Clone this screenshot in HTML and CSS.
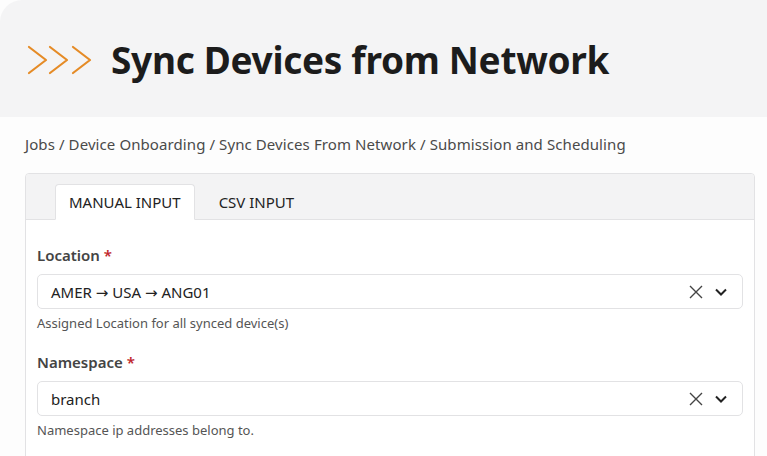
FILE: index.html
```html
<!DOCTYPE html>
<html>
<head>
<meta charset="utf-8">
<link rel="stylesheet" href="styles.css">
</head>
<body>
<header class="page-header">
  <svg class="logo" width="66" height="30" viewBox="0 0 66 30">
    <g fill="none" stroke="#e58b26" stroke-width="2.2" stroke-linecap="round" stroke-linejoin="round">
      <path d="M2 2 L19 15 L2 28"/>
      <path d="M23 2 L40 15 L23 28"/>
      <path d="M46 2 L63 15 L46 28"/>
    </g>
  </svg>
  <h1 class="title">Sync Devices from Network</h1>
</header>
<nav class="breadcrumb">Jobs / Device Onboarding / Sync Devices From Network / Submission and Scheduling</nav>
<section class="card">
  <div class="card-header">
    <div class="tab active">MANUAL INPUT</div>
    <div class="tab">CSV INPUT</div>
  </div>
  <div class="card-body">
    <div class="field">
      <label class="label">Location <span class="req">*</span></label>
      <div class="select">
        <span class="value">AMER <span class="arrow">→</span> USA <span class="arrow">→</span> ANG01</span>
        <span class="icons">
          <svg width="16" height="16" viewBox="0 0 16 16"><path d="M2 2 L14 14 M14 2 L2 14" stroke="#444" stroke-width="1.4" fill="none"/></svg>
          <svg width="14" height="14" viewBox="0 0 14 14"><path d="M2 4.5 L7 9.5 L12 4.5" stroke="#222" stroke-width="2" fill="none"/></svg>
        </span>
      </div>
      <div class="help">Assigned Location for all synced device(s)</div>
    </div>
    <div class="field">
      <label class="label">Namespace <span class="req">*</span></label>
      <div class="select">
        <span class="value">branch</span>
        <span class="icons">
          <svg width="16" height="16" viewBox="0 0 16 16"><path d="M2 2 L14 14 M14 2 L2 14" stroke="#444" stroke-width="1.4" fill="none"/></svg>
          <svg width="14" height="14" viewBox="0 0 14 14"><path d="M2 4.5 L7 9.5 L12 4.5" stroke="#222" stroke-width="2" fill="none"/></svg>
        </span>
      </div>
      <div class="help">Namespace ip addresses belong to.</div>
    </div>
  </div>
</section>
</body>
</html>
```
FILE: styles.css
```css
* { box-sizing: border-box; }
html, body { height: 456px; }
body {
  margin: 0;
  background: #fdfdfd;
  font-family: "Noto Sans", "Open Sans", sans-serif;
  color: #333;
  overflow: hidden;
}
.page-header {
  height: 117px;
  background: #f4f4f5;
  border-top-left-radius: 22px;
  display: flex;
  align-items: center;
  padding-left: 27px;
  padding-top: 2px;
  gap: 18px;
}
.logo { flex: none; }
.title {
  margin: 0;
  font-size: 37px;
  font-weight: 700;
  color: #1c1c1c;
  letter-spacing: -0.3px;
}
.breadcrumb {
  margin: 0;
  padding: 0 0 2px 25px;
  height: 56px;
  display: flex;
  align-items: center;
  font-size: 15px;
  letter-spacing: 0.09px;
  color: #4a4a4a;
}
.card {
  margin: 0 12px 0 25px;
  border: 1px solid #e2e2e4;
  border-radius: 4px;
  background: #fff;
  height: 300px;
}
.card-header {
  background: #f3f3f4;
  height: 46px;
  border-bottom: 1px solid #e2e2e4;
  display: flex;
  align-items: flex-end;
  padding-left: 29px;
  border-radius: 4px 4px 0 0;
}
.tab {
  height: 36px;
  padding: 0 13px;
  display: flex;
  align-items: center;
  font-size: 15px;
  color: #222;
  margin-bottom: -1px;
  border: 1px solid transparent;
  margin-right: 10px;
}
.tab.active {
  background: #fff;
  border-color: #e2e2e4;
  border-bottom-color: #fff;
  border-radius: 4px 4px 0 0;
}
.card-body {
  padding: 25px 11px 0 11px;
}
.field { margin-bottom: 19px; }
.label {
  display: block;
  height: 20px;
  line-height: 20px;
  font-size: 15px;
  font-weight: 600;
  color: #444;
  margin-bottom: 9px;
}
.req { color: #c0262d; }
.select {
  height: 35px;
  border: 1px solid #e2e2e4;
  border-radius: 5px;
  display: flex;
  align-items: center;
  justify-content: space-between;
  padding: 0 14px 0 13px;
  font-size: 15px;
  color: #222;
}
.arrow { font-family: "DejaVu Sans", sans-serif; font-size: 15px; }
.icons { display: flex; align-items: center; gap: 10px; }
.icons svg { display: block; }
.help {
  margin-top: 4px;
  height: 20px;
  line-height: 20px;
  font-size: 13px;
  color: #555;
}
```
